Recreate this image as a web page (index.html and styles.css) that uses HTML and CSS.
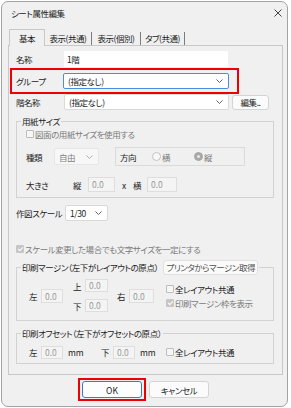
FILE: index.html
```html
<!DOCTYPE html>
<html lang="ja">
<head>
  <meta charset="UTF-8">
  <meta name="viewport" content="width=device-width, initial-scale=1.0">
  <title>シート属性編集</title>
  <link rel="stylesheet" href="styles.css">
</head>
<body>
  <div class="window">
    <div class="titlebar">
      <span class="title">シート属性編集</span>
      <svg class="close" width="8" height="8" viewBox="0 0 8 8"><path d="M0.5 0.5L7.5 7.5M7.5 0.5L0.5 7.5" stroke="#444" stroke-width="1" fill="none"/></svg>
    </div>

    <div class="tabs">
      <div class="tab active">基本</div>
      <div class="tab t2">表示(共通)</div>
      <div class="tab t3">表示(個別)</div>
      <div class="tab t4">タブ(共通)</div>
    </div>

    <div class="panel">
      <div class="row name-row">
        <span class="lbl w48">名称</span>
        <div class="field name-field">1階</div>
      </div>

      <div class="hilite group-row">
        <span class="lbl w47">グループ</span>
        <div class="combo focus group-combo">(指定なし)<svg class="chev" width="7" height="4" viewBox="0 0 7 4"><path d="M0.5 0.5L3.5 3.5L6.5 0.5" fill="none" stroke="#666"/></svg></div>
      </div>

      <div class="row kai-row">
        <span class="lbl w48">階名称</span>
        <div class="combo kai-combo">(指定なし)<svg class="chev" width="7" height="4" viewBox="0 0 7 4"><path d="M0.5 0.5L3.5 3.5L6.5 0.5" fill="none" stroke="#666"/></svg></div>
        <button class="btn edit-btn">編集..</button>
      </div>

      <fieldset class="group paper">
        <legend>用紙サイズ</legend>
        <div class="row chk-row">
          <span class="check off"></span><span class="dim">図面の用紙サイズを使用する</span>
        </div>
        <div class="row kind-row">
          <span class="lbl w28">種類</span>
          <div class="combo disabled kind-combo">自由<svg class="chev" width="7" height="4" viewBox="0 0 7 4"><path d="M0.5 0.5L3.5 3.5L6.5 0.5" fill="none" stroke="#b0b0b0"/></svg></div>
          <div class="dir-box">
            <span class="lbl w32">方向</span>
            <span class="radio-item r1"><span class="radio"></span><span class="dim">横</span></span>
            <span class="radio-item"><span class="radio on"></span><span class="dim">縦</span></span>
          </div>
        </div>
        <div class="row size-row">
          <span class="lbl w47">大きさ</span>
          <span class="lbl w15">縦</span>
          <div class="num w27">0.0</div>
          <span class="lbl xsep">x</span>
          <span class="lbl w14">横</span>
          <div class="num w30">0.0</div>
        </div>
      </fieldset>

      <div class="row scale-row">
        <span class="lbl w49">作図スケール</span>
        <div class="combo scale-combo">1/30<svg class="chev" width="7" height="4" viewBox="0 0 7 4"><path d="M0.5 0.5L3.5 3.5L6.5 0.5" fill="none" stroke="#666"/></svg></div>
      </div>

      <div class="row keep-row">
        <span class="check on"></span><span class="dim">スケール変更した場合でも文字サイズを一定にする</span>
      </div>

      <fieldset class="group margin-group">
        <legend class="legend-flex">
          <span>印刷マージン（左下がレイアウトの原点）</span>
          <button class="btn printer-btn">プリンタからマージン取得</button>
        </legend>
        <div class="row margin-row">
          <div class="col col-a">
            <span class="lbl w12">左</span><div class="num w22 h14">0.0</div>
          </div>
          <div class="col col-b">
            <div class="sub"><span class="lbl w12">上</span><div class="num w23">0.0</div></div>
            <div class="sub"><span class="lbl w12">下</span><div class="num w23">0.0</div></div>
          </div>
          <div class="col col-c">
            <span class="lbl w12">右</span><div class="num w25 h14">0.0</div>
          </div>
          <div class="col col-d">
            <div class="sub chk"><span class="check off"></span><span>全レイアウト共通</span></div>
            <div class="sub chk"><span class="check on"></span><span>印刷マージン枠を表示</span></div>
          </div>
        </div>
      </fieldset>

      <fieldset class="group offset-group">
        <legend>印刷オフセット（左下がオフセットの原点）</legend>
        <div class="row offset-row">
          <span class="lbl w12">左</span><div class="num w22">0.0</div>
          <span class="unit">mm</span>
          <span class="lbl w12 gap-down">下</span><div class="num w22">0.0</div>
          <span class="unit">mm</span>
          <span class="sub chk offset-chk"><span class="check off"></span><span>全レイアウト共通</span></span>
        </div>
      </fieldset>
    </div>

    <div class="buttons">
      <div class="hilite-btn"><button class="btn ok-btn">OK</button></div>
      <button class="btn cancel-btn">キャンセル</button>
    </div>
  </div>
</body>
</html>
```

FILE: styles.css
```css
:root {
  --bg: #f0f0f0;
  --text: #1b1b1b;
  --dim: #7a7a7a;
  --line: #d2d2d2;
  --red: #ee0000;
  --font: "Noto Sans CJK JP", "Noto Sans", sans-serif;
}

* {
  box-sizing: border-box;
}

body {
  margin: 0;
  background: #ffffff;
  font-family: var(--font);
  font-size: 8.5px;
  line-height: 12px;
  letter-spacing: -0.45px;
  font-feature-settings: "palt";
  color: var(--text);
}

.window {
  margin: 1px 3px 0 1px;
  height: 406px;
  border: 1px solid #a3a3a3;
  border-radius: 7px;
  background: var(--bg);
  overflow: hidden;
}

.titlebar {
  height: 22px;
  display: flex;
  align-items: center;
  justify-content: space-between;
  padding: 0 5px 0 9px;
  color: #222;
}

/* tabs */
.tabs {
  display: flex;
  align-items: flex-end;
  height: 16px;
  margin: 5px 0 0 7px;
}

.tab {
  height: 13px;
  line-height: 13px;
  text-align: center;
  border-right: 1px solid #7c7c7c;
  white-space: nowrap;
}

.tab.active {
  width: 36px;
  height: 17px;
  line-height: 16px;
  border: 1px solid #c8c8c8;
  border-bottom: none;
  background: var(--bg);
  margin-bottom: -1px;
  position: relative;
  z-index: 1;
}

.t2 { width: 47px; }
.t3 { width: 49px; }
.t4 { width: 44px; }

.panel {
  margin: 0 4px 0 6px;
  height: 330px;
  border: 1px solid #c8c8c8;
  background: var(--bg);
}

/* rows and labels */
.row {
  display: flex;
  align-items: center;
}

.lbl {
  flex: none;
  white-space: nowrap;
}

.w12 { width: 12px; }
.w14 { width: 14px; }
.w15 { width: 15px; }
.w28 { width: 28px; }
.w32 { width: 32px; }
.w47 { width: 47px; }
.w48 { width: 48px; }
.w49 { width: 49px; }

.dim {
  color: var(--dim);
  white-space: nowrap;
}

.field {
  height: 16px;
  line-height: 16px;
  background: #ffffff;
  padding-left: 3px;
}

.combo {
  display: flex;
  align-items: center;
  height: 16px;
  background: #ffffff;
  border: 1px solid #d9d9d9;
  border-radius: 2px;
  padding: 0 5px 0 4px;
  white-space: nowrap;
}

.combo .chev {
  margin-left: auto;
}

.combo.focus {
  border-color: #4a8fd8;
}

.combo.disabled {
  background: #f7f7f7;
  border-color: #e6e6e6;
  color: #7f7f7f;
}

.num {
  flex: none;
  height: 15px;
  line-height: 13px;
  border: 1px solid #dedede;
  background: #f4f4f4;
  color: #999;
  padding-left: 3px;
  letter-spacing: 0;
}

.w22 { width: 22px; }
.w23 { width: 23px; }
.w25 { width: 25px; }
.w27 { width: 27px; }
.w30 { width: 30px; }
.h14 { height: 14px; }

.btn {
  font-family: var(--font);
  font-size: 8.5px;
  letter-spacing: -0.45px;
  font-feature-settings: "palt";
  color: var(--text);
  background: #fbfbfb;
  border: 1px solid #d4d4d4;
  border-radius: 3px;
  padding: 0;
  line-height: 12px;
}

.check {
  flex: none;
  width: 8px;
  height: 8px;
  border: 1px solid #bdbdbd;
  border-radius: 1px;
  background: #f6f6f6;
  margin-right: 1px;
  position: relative;
}

.check.on {
  background: #c6c6c6;
  border-color: #c6c6c6;
}

.check.on::after {
  content: "";
  position: absolute;
  left: 2px;
  top: 0px;
  width: 2px;
  height: 4px;
  border: solid #ffffff;
  border-width: 0 1px 1px 0;
  transform: rotate(45deg);
}

/* name / group / floor name */
.name-row {
  margin-top: 5px;
  height: 16px;
  padding-left: 7px;
}

.name-field {
  width: 164px;
}

.hilite {
  margin: 1px 0 0 1px;
  width: 229px;
  height: 26px;
  border: 2px solid var(--red);
  display: flex;
  align-items: center;
  padding-left: 4px;
}

.group-combo {
  width: 166px;
}

.kai-row {
  height: 16px;
  padding-left: 7px;
}

.kai-combo {
  width: 165px;
}

.edit-btn {
  margin-left: 3px;
  width: 37px;
  height: 15px;
}

/* group boxes */
.group {
  margin: 0 0 0 7px;
  padding: 0;
  min-width: 0;
  width: 258px;
  border: 1px solid var(--line);
}

.group legend {
  margin-left: 4px;
  padding: 0 1px;
  line-height: 12px;
  height: 12px;
  white-space: nowrap;
}

.paper {
  margin-top: 5px;
  height: 83px;
}

.chk-row {
  height: 14px;
  padding-left: 9px;
}

.kind-row {
  margin-top: 6px;
  height: 19px;
  padding-left: 9px;
}

.kind-combo {
  width: 45px;
  height: 17px;
  flex: none;
}

.dir-box {
  display: flex;
  align-items: center;
  margin-left: 16px;
  width: 130px;
  height: 19px;
  border: 1px solid #dadada;
  padding-left: 4px;
}

.radio-item {
  display: flex;
  align-items: center;
}

.radio-item.r1 {
  width: 42px;
}

.radio {
  width: 9px;
  height: 9px;
  border: 1px solid #c3c3c3;
  border-radius: 50%;
  background: #f8f8f8;
  margin-right: 1px;
  position: relative;
}

.radio.on {
  background: #a8a8a8;
  border-color: #a8a8a8;
}

.radio.on::after {
  content: "";
  position: absolute;
  left: 2px;
  top: 2px;
  width: 3px;
  height: 3px;
  border-radius: 50%;
  background: #e8e8e8;
}

.size-row {
  margin-top: 11px;
  height: 15px;
  padding-left: 9px;
}

.xsep {
  width: 18px;
  padding-left: 7px;
}

.scale-row {
  margin-top: 7px;
  height: 16px;
  padding-left: 7px;
}

.scale-combo {
  width: 43px;
}

.keep-row {
  margin-top: 21px;
  height: 14px;
  padding-left: 7px;
}

/* print margin */
.margin-group {
  margin-top: 4px;
  height: 61px;
}

.group .legend-flex {
  display: flex;
  align-items: center;
  height: 14px;
  gap: 5px;
}

.printer-btn {
  flex: none;
  width: 95px;
  height: 15px;
  line-height: 13px;
  text-align: center;
  color: #505050;
  background: #fafafa;
  border-color: #e0e0e0;
}

.margin-row {
  margin-top: 5px;
  height: 33px;
  padding-left: 12px;
}

.col {
  display: flex;
  align-items: center;
}

.col-b,
.col-d {
  flex-direction: column;
  align-items: flex-start;
}

.col-b {
  margin-left: 10px;
  gap: 7px;
}

.col-b .num {
  height: 13px;
  line-height: 11px;
}

.col-c {
  margin-left: 9px;
}

.col-d {
  margin-left: 12px;
}

.sub {
  display: flex;
  align-items: center;
}

.sub.chk {
  height: 14px;
  white-space: nowrap;
}

.col-d .sub.chk:last-child span:last-child {
  color: var(--dim);
}

/* print offset */
.offset-group {
  margin-top: 6px;
  height: 37px;
}

.offset-row {
  margin-top: 6px;
  height: 14px;
  padding-left: 12px;
}

.offset-row .num {
  height: 13px;
  line-height: 11px;
}

.unit {
  width: 16px;
  margin-left: 5px;
  flex: none;
  letter-spacing: 0;
}

.gap-down {
  margin-left: 17px;
}

.offset-chk {
  margin-left: 10px;
}

/* bottom buttons */
.buttons {
  display: flex;
  align-items: center;
  margin-top: 3px;
  padding-left: 76px;
}

.hilite-btn {
  border: 2px solid var(--red);
  padding: 1px 2px;
}

.ok-btn {
  display: block;
  width: 60px;
  height: 17px;
  border-color: #3a7bd0;
  background: #fdfdfd;
  letter-spacing: 0;
}

.cancel-btn {
  margin-left: 3px;
  width: 60px;
  height: 17px;
}
```
